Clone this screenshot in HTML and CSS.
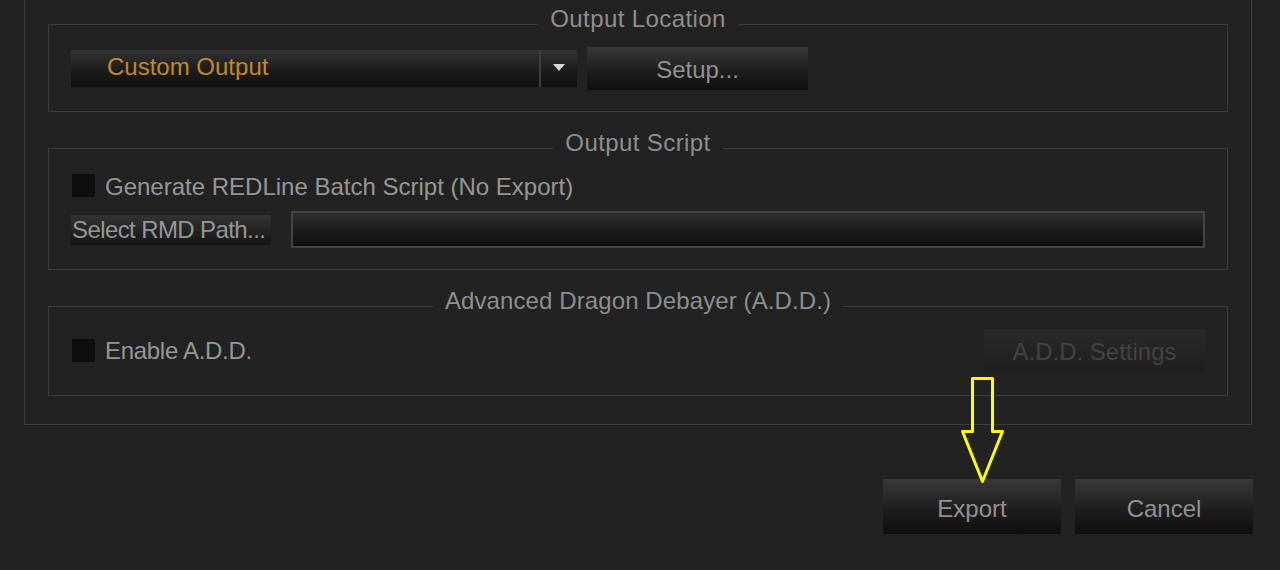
FILE: index.html
```html
<!DOCTYPE html>
<html lang="en">
<head>
    <meta charset="UTF-8">
    <meta name="viewport" content="width=device-width, initial-scale=1.0">
    <title>Export</title>
    <link rel="stylesheet" href="styles.css">
</head>
<body>
  <div class="panel">

    <fieldset class="group" id="outputLocation">
      <legend>Output Location</legend>
      <div class="row">
        <div class="dropdown">
          <span class="dropdownValue">Custom Output</span>
          <span class="dropdownArrow">
            <svg width="12" height="7" viewBox="0 0 12 7"><path d="M0 0 H12 L6 7 Z" fill="#d8d8d8"/></svg>
          </span>
        </div>
        <button class="btn setupBtn">Setup...</button>
      </div>
    </fieldset>

    <fieldset class="group" id="outputScript">
      <legend>Output Script</legend>
      <label class="check">
        <span class="box"></span>
        <span class="checkText">Generate REDLine Batch Script (No Export)</span>
      </label>
      <div class="row pathRow">
        <button class="pathBtn">Select RMD Path...</button>
        <div class="pathField"></div>
      </div>
    </fieldset>

    <fieldset class="group" id="addGroup">
      <legend class="longTitle">Advanced Dragon Debayer (A.D.D.)</legend>
      <div class="row spread">
        <label class="check tight">
          <span class="box"></span>
          <span class="checkText">Enable A.D.D.</span>
        </label>
        <button class="btn setupBtn" disabled>A.D.D. Settings</button>
      </div>
    </fieldset>

  </div>

  <div class="footer">
    <button class="btn footBtn">Export</button>
    <button class="btn footBtn">Cancel</button>
  </div>

  <!-- callout pointing at the export button -->
  <svg class="callout" width="50" height="115" viewBox="958 374 50 115">
    <path d="M972.5 378.5 H992.5 V431.5 H1002.5 L982.5 481.5 L962.5 431.5 H972.5 Z"
          fill="none" stroke="#ffff00" stroke-width="3" stroke-linejoin="round"/>
  </svg>
</body>
</html>
```

FILE: styles.css
```css
body
{
    margin: 0;
    background-color: #222222;
    font-family: "Liberation Sans", Arial, sans-serif;
    font-size: 24px;
    color: #939393;
    position: relative;
    height: 570px;
    overflow: hidden;
}
.panel
{
    margin-left: 24px;
    width: 1228px;
    box-sizing: border-box;
    border: 1px solid #3c3c3c;
    border-top: none;
    padding: 5px 23px 28px 23px;
}
.group
{
    margin: 0;
    min-width: 0;
    border: 1px solid #3c3c3c;
    padding: 4px 22px 21px 22px;
}
.group + .group
{
    margin-top: 17px;
}
legend
{
    margin: 0 auto;
    padding: 0 12px 10px 12px;
    line-height: 28px;
    letter-spacing: 0.4px;
    color: #8e8e8e;
}
.longTitle
{
    letter-spacing: 0.1px;
}
#outputScript
{
    padding-top: 6px;
}
#addGroup
{
    padding-bottom: 23px;
}
.row
{
    display: flex;
    align-items: center;
}
.spread
{
    justify-content: space-between;
}
button
{
    font-family: inherit;
    font-size: 24px;
    border: none;
    padding: 0;
    cursor: pointer;
}
.btn
{
    background: linear-gradient(#383838, #1c1c1c 60%, #0f0f0f);
    color: #929292;
}
.btn:disabled
{
    background: linear-gradient(#292929, #1f1f1f);
    color: #434343;
    cursor: default;
}

/* output location */
.dropdown
{
    display: flex;
    width: 506px;
    height: 37px;
}
.dropdownValue
{
    flex: 1;
    display: flex;
    align-items: center;
    padding-left: 36px;
    padding-bottom: 4px;
    color: #c08a2c;
    background: linear-gradient(#333333, #1a1a1a 60%, #111111);
    border-right: 2px solid #3e3e3e;
}
.dropdownArrow
{
    width: 36px;
    display: flex;
    align-items: center;
    justify-content: center;
    padding-bottom: 2px;
    background: linear-gradient(#333333, #1a1a1a 60%, #111111);
}
.setupBtn
{
    width: 221px;
    height: 43px;
    margin-left: 10px;
    padding-top: 2px;
}

/* checkboxes */
.check
{
    display: flex;
    align-items: center;
    height: 24px;
    margin-left: 1px;
    color: #969696;
}
.checkText
{
    padding-top: 3px;
}
.tight .checkText
{
    padding-top: 0;
}
.box
{
    width: 23px;
    height: 23px;
    background-color: #0e0e0e;
    margin-right: 10px;
}
.tight
{
    letter-spacing: -0.3px;
}

/* output script */
.pathRow
{
    margin-top: 14px;
}
.pathBtn
{
    width: 200px;
    height: 30px;
    white-space: nowrap;
    overflow: hidden;
    text-align: left;
    line-height: 30px;
    letter-spacing: -0.6px;
    padding-left: 1px;
    color: #969696;
    background: linear-gradient(#333333, #151515);
}
.pathField
{
    flex: 1;
    height: 37px;
    margin-left: 20px;
    box-sizing: border-box;
    border: 2px solid #444444;
    background: linear-gradient(#2e2e2e, #1a1a1a 60%, #111111);
}

/* dialog buttons */
.footer
{
    display: flex;
    justify-content: flex-end;
    gap: 14px;
    margin-top: 54px;
    margin-right: 27px;
}
.footBtn
{
    width: 178px;
    height: 55px;
    padding-top: 4px;
}
.callout
{
    position: absolute;
    left: 958px;
    top: 374px;
}
```
